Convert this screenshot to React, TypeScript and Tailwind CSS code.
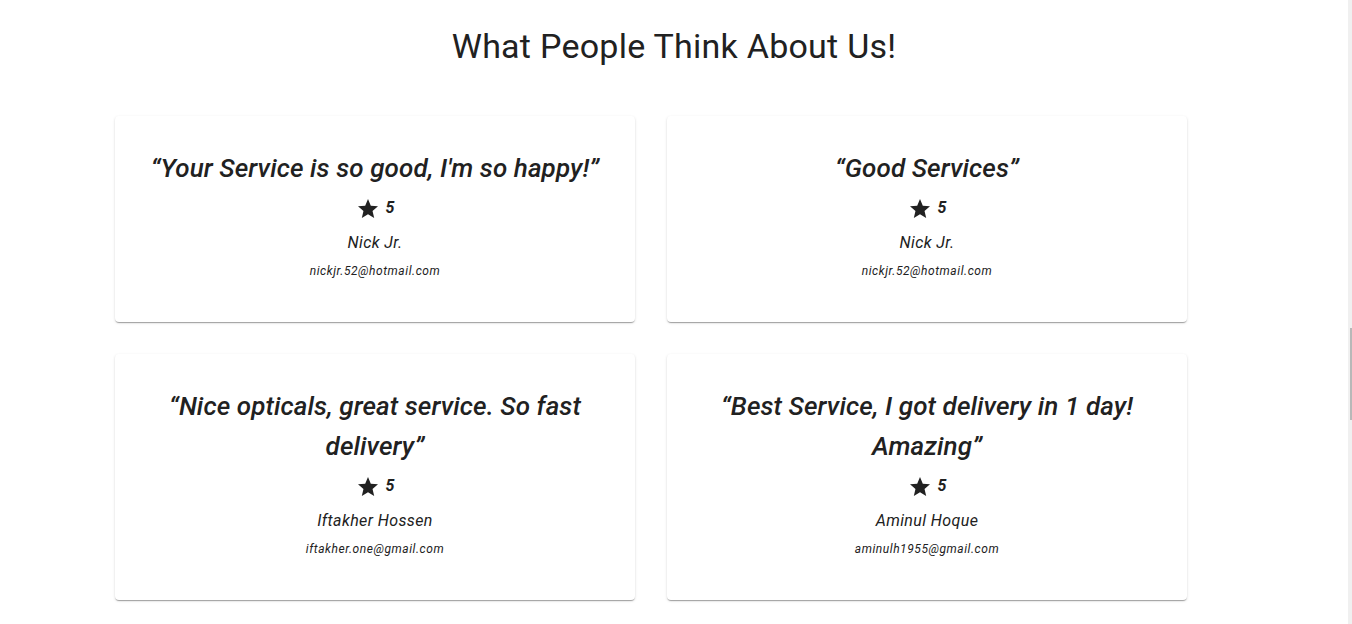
import React from "react";

const reviews = [
  { quote: "“Your Service is so good, I'm so happy!”", rating: 5, name: "Nick Jr.", email: "nickjr.52@hotmail.com" },
  { quote: "“Good Services”", rating: 5, name: "Nick Jr.", email: "nickjr.52@hotmail.com" },
  { quote: "“Nice opticals, great service. So fast delivery”", rating: 5, name: "Iftakher Hossen", email: "iftakher.one@gmail.com" },
  { quote: "“Best Service, I got delivery in 1 day! Amazing”", rating: 5, name: "Aminul Hoque", email: "aminulh1955@gmail.com" },
];

function Star() {
  return (
    <svg width="24" height="24" viewBox="0 0 24 24" fill="#212121" aria-hidden="true">
      <path d="M12 17.27L18.18 21l-1.64-7.03L22 9.24l-7.19-.61L12 2 9.19 8.63 2 9.24l5.46 4.73L5.82 21z" />
    </svg>
  );
}

export default function App() {
  return (
    <div className="flex min-h-[624px] w-full bg-white font-['Roboto',sans-serif] text-[#212121]">
      <div className="flex-1">
        <h1 className="pt-[25px] text-center text-[34px] font-normal leading-[42px] tracking-[0.25px]">
          What People Think About Us!
        </h1>
        <div className="mt-[49px] grid grid-cols-[520px_520px] items-start gap-8 pl-[115px]">
          {reviews.map((r, i) => (
            <div
              key={i}
              className="flex flex-col items-center rounded bg-white px-4 pt-[32px] pb-[41px] text-center shadow-[0px_2px_1px_-1px_rgba(0,0,0,0.2),0px_1px_1px_0px_rgba(0,0,0,0.14),0px_1px_3px_0px_rgba(0,0,0,0.12)]"
            >
              <p className="text-[26px] font-medium italic leading-[40px] tracking-[0.1px]">{r.quote}</p>
              <div className="mt-[9px] flex h-6 items-center gap-[6px]">
                <Star />
                <span className="-mt-[3px] text-[16px] font-bold italic leading-none">{r.rating}</span>
              </div>
              <p className="mt-[10px] text-[16px] italic leading-[24px] tracking-[0.4px]">{r.name}</p>
              <p className="mt-[6px] text-[12px] italic leading-[20px] tracking-[0.55px]">{r.email}</p>
            </div>
          ))}
        </div>
      </div>
      <div className="flex w-[4px] flex-col bg-[#f0f0f0]">
        <div className="h-[328px]" />
        <div className="ml-[2px] h-[92px] w-[2px] bg-[#b8b8b8]" />
      </div>
    </div>
  );
}
